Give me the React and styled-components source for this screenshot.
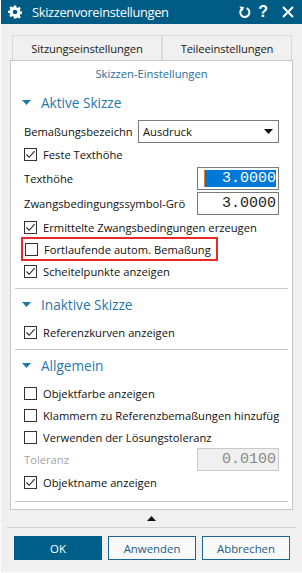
import React from "react";
import styled, { createGlobalStyle } from "styled-components";

const Global = createGlobalStyle`
  html, body { margin: 0; padding: 0; background: #f0f0f0; }
  body { font-family: "Segoe UI", "Open Sans", "Noto Sans", sans-serif; }
  * { box-sizing: border-box; }
`;

const Win = styled.div`
  width: 302px;
  height: 573px;
  background: #f0f0f0;
  display: flex;
  flex-direction: column;
  border-left: 1px solid #fbfbfb;
  border-bottom: 1px solid #fbfbfb;
`;

const TitleBar = styled.div`
  height: 24px;
  background: #005c84;
  color: #fff;
  display: flex;
  align-items: center;
  padding: 0 8px 0 7px;
  gap: 10px;
`;

const Title = styled.div`
  flex: 1;
  font-size: 12.8px;
  letter-spacing: -0.3px;
`;

const TitleIcons = styled.div`
  display: flex;
  align-items: center;
  gap: 7px;
`;

const Help = styled.span`
  font-family: "Liberation Sans", Arial, sans-serif;
  font-weight: bold;
  font-size: 16px;
  line-height: 1;
  margin-right: 7px;
`;

const Body = styled.div`
  padding: 11px 9px 0 9px;
  display: flex;
  flex-direction: column;
`;

const TabRow = styled.div`
  display: flex;
  padding-left: 2px;
`;

const Tab = styled.div`
  width: ${(p) => p.$w}px;
  height: 25px;
  border: 1px solid #d9d9d9;
  border-bottom: none;
  background: #f0f0f0;
  display: flex;
  align-items: center;
  justify-content: center;
  font-size: 11.2px;
  letter-spacing: -0.1px;
  color: #1a1a1a;
`;

const Panel = styled.div`
  background: #fff;
  border: 1px solid #c6c6c6;
  display: flex;
  flex-direction: column;
  padding: 0 4px 7px 4px;
`;

const PanelHeading = styled.div`
  height: 24px;
  display: flex;
  align-items: center;
  justify-content: center;
  font-size: 11.2px;
  color: #2a6f99;
`;

const Section = styled.div`
  padding-top: ${(p) => p.$pt}px;
  padding-bottom: ${(p) => p.$pb}px;
  border-bottom: 1px solid #c8c8c8;
  display: flex;
  flex-direction: column;
`;

const SectionHead = styled.div`
  height: 22px;
  display: flex;
  align-items: center;
  gap: 10px;
  padding-left: 7px;
  font-size: 13.6px;
  color: #1f78ad;
  margin-bottom: 6px;
`;

const Row = styled.div`
  height: ${(p) => p.$h || 22}px;
  display: flex;
  align-items: center;
  padding-left: 9px;
  padding-right: 9px;
  font-size: 11.2px;
  color: ${(p) => (p.$disabled ? "#a3a3a3" : "#111")};
`;

const Label = styled.span`
  flex: 1;
  white-space: nowrap;
  overflow: hidden;
`;

const CheckLabel = styled.span`
  white-space: nowrap;
  overflow: hidden;
  margin-left: 6px;
`;

const Box = styled.span`
  width: 13px;
  height: 13px;
  flex: none;
  border: 1px solid #333;
  background: #fff;
  display: flex;
  align-items: center;
  justify-content: center;
`;

const Highlight = styled.div`
  display: flex;
  align-items: center;
  margin-left: -3px;
  padding: 0 5px 0 2px;
  height: 24px;
  border: 2px solid #e8282b;
`;

const Select = styled.div`
  width: 141px;
  height: 23px;
  border: 1px solid #7a7a7a;
  background: #fff;
  display: flex;
  align-items: center;
  justify-content: space-between;
  padding: 0 5px 0 4px;
  font-size: 11.2px;
`;

const NumInput = styled.div`
  width: 82px;
  height: 23px;
  border: 1px solid ${(p) => (p.$disabled ? "#c9c9c9" : "#7a7a7a")};
  background: ${(p) => (p.$disabled ? "#f0f0f0" : "#fff")};
  display: flex;
  align-items: center;
  justify-content: flex-end;
  padding: 2px 2px;
  font-family: "Liberation Mono", "Courier New", monospace;
  font-size: 15px;
  color: ${(p) => (p.$disabled ? "#8a8a8a" : "#222")};
`;

const Selected = styled.span`
  flex: 1;
  height: 17px;
  background: #0078d7;
  color: #fff;
  border-left: 1px solid #e07b2a;
  display: flex;
  align-items: center;
  justify-content: flex-end;
  margin-left: 4px;
`;

const Expander = styled.div`
  height: 18px;
  display: flex;
  align-items: center;
  justify-content: center;
  border-bottom: 1px solid #d0d0d0;
  margin: 0 -3px;
`;

const ButtonRow = styled.div`
  display: flex;
  gap: 6px;
  padding: 8px 0 0 4px;
`;

const Button = styled.button`
  width: 88px;
  height: 24px;
  border: 1px solid ${(p) => (p.$primary ? "#005c84" : "#1b6790")};
  background: ${(p) => (p.$primary ? "#005f88" : "#f9f9f9")};
  color: ${(p) => (p.$primary ? "#fff" : "#1e5d82")};
  font-family: inherit;
  font-size: 11.4px;
  padding: 0;
`;

const Tri = ({ color = "#1f78ad", up }) => (
  <svg width="9" height="5" viewBox="0 0 9 5" style={up ? { transform: "rotate(180deg)" } : undefined}>
    <polygon points="0,0 9,0 4.5,5" fill={color} />
  </svg>
);

const Check = ({ checked }) => (
  <Box>
    {checked && (
      <svg width="11" height="11" viewBox="0 0 11 11">
        <polyline points="1.5,5.5 4.2,8.3 9.6,2.2" fill="none" stroke="#222" strokeWidth="1.1" />
      </svg>
    )}
  </Box>
);

const CheckRow = ({ checked, children }) => (
  <Row>
    <Check checked={checked} />
    <CheckLabel>{children}</CheckLabel>
  </Row>
);

const Gear = () => (
  <svg width="14" height="14" viewBox="0 0 24 24">
    <path
      fill="#fff"
      fillRule="evenodd"
      d="M10 1h4l.6 3.1 2 .9 2.6-1.8 2.8 2.8-1.8 2.6.9 2 3.1.6v4l-3.1.6-.9 2 1.8 2.6-2.8 2.8-2.6-1.8-2 .9L14 23h-4l-.6-3.1-2-.9-2.6 1.8-2.8-2.8 1.8-2.6-.9-2L0 14v-4l3.1-.6.9-2L2.2 4.8 5 2l2.6 1.8 2-.9zM12 8a4 4 0 1 0 0 8 4 4 0 0 0 0-8z"
    />
  </svg>
);

const Reset = () => (
  <svg width="13" height="13" viewBox="0 0 13 13">
    <path d="M4.2 2.6A4.6 4.6 0 1 0 8.6 2.1" fill="none" stroke="#fff" strokeWidth="2" />
    <polygon points="1.3,0.6 6.2,0.9 4.4,5.2" fill="#fff" />
  </svg>
);

const Close = () => (
  <svg width="12" height="12" viewBox="0 0 12 12">
    <path d="M1 1L11 11M11 1L1 11" stroke="#fff" strokeWidth="2" />
  </svg>
);

export default function App() {
  return (
    <>
      <Global />
      <Win>
        <TitleBar>
          <Gear />
          <Title>Skizzenvoreinstellungen</Title>
          <TitleIcons>
            <Reset />
            <Help>?</Help>
            <Close />
          </TitleIcons>
        </TitleBar>
        <Body>
          <TabRow>
            <Tab $w={150}>Sitzungseinstellungen</Tab>
            <Tab $w={130}>Teileeinstellungen</Tab>
          </TabRow>
          <Panel>
            <PanelHeading>Skizzen-Einstellungen</PanelHeading>
            <Section $pt={6} $pb={6}>
              <SectionHead>
                <Tri />
                Aktive Skizze
              </SectionHead>
              <Row $h={24}>
                <Label>Bemaßungsbezeichn</Label>
                <Select>
                  <span>Ausdruck</span>
                  <Tri color="#111" />
                </Select>
              </Row>
              <Row $h={23}>
                <Check checked />
                <CheckLabel>Feste Texthöhe</CheckLabel>
              </Row>
              <Row $h={25}>
                <Label>Texthöhe</Label>
                <NumInput>
                  <Selected>3.0000</Selected>
                </NumInput>
              </Row>
              <Row $h={25}>
                <Label>Zwangsbedingungssymbol-Grö</Label>
                <NumInput>3.0000</NumInput>
              </Row>
              <CheckRow checked>Ermittelte Zwangsbedingungen erzeugen</CheckRow>
              <Row>
                <Highlight>
                  <Check />
                  <CheckLabel>Fortlaufende autom. Bemaßung</CheckLabel>
                </Highlight>
              </Row>
              <CheckRow checked>Scheitelpunkte anzeigen</CheckRow>
            </Section>
            <Section $pt={4} $pb={6}>
              <SectionHead>
                <Tri />
                Inaktive Skizze
              </SectionHead>
              <CheckRow checked>Referenzkurven anzeigen</CheckRow>
            </Section>
            <Section $pt={4} $pb={8}>
              <SectionHead>
                <Tri />
                Allgemein
              </SectionHead>
              <CheckRow>Objektfarbe anzeigen</CheckRow>
              <CheckRow>Klammern zu Referenzbemaßungen hinzufügen</CheckRow>
              <CheckRow>Verwenden der Lösungstoleranz</CheckRow>
              <Row $h={23} $disabled>
                <Label>Toleranz</Label>
                <NumInput $disabled>0.0100</NumInput>
              </Row>
              <CheckRow checked>Objektname anzeigen</CheckRow>
            </Section>
          </Panel>
          <Expander>
            <Tri color="#111" up />
          </Expander>
          <ButtonRow>
            <Button $primary>OK</Button>
            <Button>Anwenden</Button>
            <Button>Abbrechen</Button>
          </ButtonRow>
        </Body>
      </Win>
    </>
  );
}
